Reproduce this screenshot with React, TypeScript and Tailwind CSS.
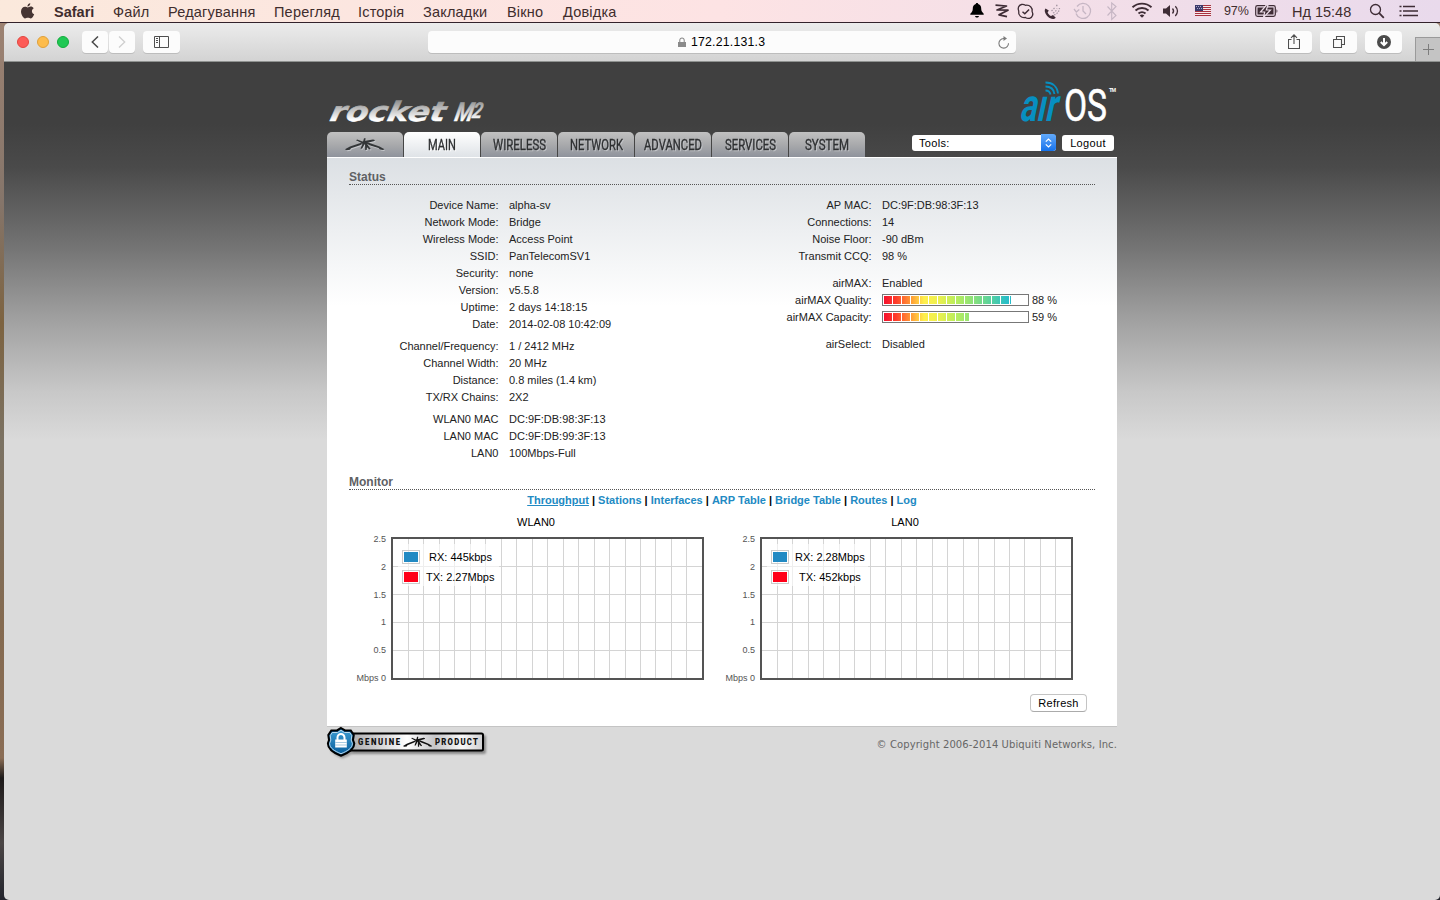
import React from "react";

const MENU: { t: string; w: number; b?: boolean }[] = [
  { t: "Safari", w: 40, b: true },
  { t: "Файл", w: 36 },
  { t: "Редагування", w: 87 },
  { t: "Перегляд", w: 65 },
  { t: "Історія", w: 46 },
  { t: "Закладки", w: 65 },
  { t: "Вікно", w: 37 },
  { t: "Довідка", w: 55 },
];

function MenuBar() {
  return (
    <header className="flex h-[23px] items-center border-b border-[#33222b] bg-linear-to-r from-[#fbe9dc] via-[#fde3e4] to-[#e9daec] text-[#3f2d2d]">
      <svg className="-mt-px ml-5 h-4 w-[15px]" viewBox="0 0 15 16" fill="#463533">
        <path d="M10.3 0.2c.1 1.700-1.300 3.300-2.900 3.300C7.200 1.900 8.700.4 10.300.2zM7.700 4.400c.8 0 1.700-.8 3-.8 1.200 0 2.300.6 3 1.600-2.600 1.500-2.200 5 .5 6.100-.6 1.700-2 4.100-3.400 4.100-1.100 0-1.500-.7-2.900-.7s-1.900.7-2.900.7C3.500 15.400 1 11.900 1 8.600c0-3.200 2-4.900 4-4.900 1.300 0 2 .7 2.700.7z" />
      </svg>
      <nav className="ml-[19px] flex items-center gap-[19px] pt-[2px] leading-5">
        {MENU.map((m) => (
          <span key={m.t} style={{ width: m.w }} className={m.b ? "whitespace-nowrap text-[14.5px] font-bold" : "whitespace-nowrap text-[14.5px] tracking-[0.2px]"}>
            {m.t}
          </span>
        ))}
      </nav>
      <svg className="ml-auto h-[22px] w-[251px]" viewBox="0 0 251 22" fill="none" stroke="#3e2c35" strokeWidth="1.300">
        <g transform="translate(2.500 0)" fill="#000" stroke="none">
          <path d="M7.500 3c.8 0 1.200.5 1.200 1 2.200.7 3 2.500 3 4.500 0 2.600 1 3.700 2.500 5.200v1H.8v-1C2.300 12.300 3.300 11.200 3.300 8.500c0-2 .8-3.800 3-4.500 0-.5.400-1 1.200-1zM5.500 16h4c-.3 1-1 1.500-2 1.500s-1.700-.5-2-1.500z" />
        </g>
        <path d="M28.500 5.200l11 .8-9.500 4 11 .2-9 4.600 8 1.800" strokeWidth="1.700" strokeLinejoin="round" />
        <g transform="translate(4.500 0)">
          <path d="M50 4.500c1.600-.3 3 .2 4 .8 4.300-.7 7.300 2.500 6.600 6.200 1.400 2.600.6 6-2.500 6.800-1.500.4-3 0-4.200-.8-4 .8-7.400-2.300-6.700-6.500C46 8.500 47 5 50 4.500z" />
          <path d="M51 11.800l2.300 2 4.300-4.300" strokeWidth="1.500" />
        </g>
        <g transform="translate(3 1)">
          <path d="M75.500 7.500c-2 2.500.5 6.300 2.500 8.200 2.200 2.200 5.700 3.200 7.800 1l-2.800-2.700-2 1c-1.500-.8-2.900-2.300-3.400-3.600l1.200-1.800z" fill="#3e2c35" stroke="none" />
          <path d="M81.500 10l4-4M83 12c2-1 3.500-2.500 4-4.500M84 14c3-1 5-3 5.500-7M86 4.500h1.500" stroke="#a899a5" strokeDasharray="1.500 1.300" />
        </g>
        <g transform="translate(10 0)" stroke="#c6b6c4">
          <path d="M100 6.500a7.500 7.500 0 1 1-1 7M97 9l2.300 3 3-2.500M106 6v5l3 3" />
        </g>
        <g transform="translate(8 0)" stroke="#c6b6c4">
          <path d="M132.500 6.500l8.500 9-4.300 4V3l4.300 3.500-8.500 9" strokeWidth="1.100" />
        </g>
        <g transform="translate(8 0)">
          <path d="M157.500 7.300a14 14 0 0 1 19 0M160.500 10.500a9.500 9.500 0 0 1 13 0M163.500 13.500a5.300 5.300 0 0 1 7 0" strokeWidth="1.900" />
          <path d="M164.700 15.500l2.300 2.300 2.300-2.300a3.500 3.500 0 0 0-4.600 0z" fill="#3e2c35" stroke="none" />
        </g>
        <g transform="translate(8.500 0)">
          <path d="M187.500 8.500h3l4-3.500v12l-4-3.500h-3z" fill="#3e2c35" stroke="none" />
          <path d="M197 8.500c1.300 1.500 1.300 3.500 0 5M199.800 6.200c2.900 2.800 2.900 7 0 9.800" />
        </g>
        <g transform="translate(8.500 0)" shapeRendering="crispEdges">
          <path d="M219.500 5h16v11h-16z" fill="#f5e8ec" stroke="none" />
          <path d="M219.500 5.500h16M219.500 7.500h16M219.500 9.500h16M219.500 11.500h16M219.500 13.500h16M219.500 15.500h16" stroke="#a8323f" strokeWidth="1" />
          <path d="M219.500 5h8v6h-8z" fill="#3c3a6b" stroke="none" />
          <path d="M220.500 6.500h6M221.500 8.500h6" stroke="#a9a6c8" strokeWidth="1" strokeDasharray="1 1" />
        </g>
      </svg>
      <span className="ml-[6px] w-[27px] text-[12.5px] tracking-[-0.1px]">97%</span>
      <svg className="ml-1 h-[14px] w-6" viewBox="0 0 24 14">
        <rect x=".7" y="1.700" width="19.600" height="10.600" rx="1.800" fill="none" stroke="#3e2c35" strokeWidth="1.200" />
        <rect x="2.500" y="3.500" width="16" height="7" fill="#3e2c35" />
        <path d="M21.500 5.200c1.200.4 1.200 3.200 0 3.600z" fill="#3e2c35" />
        <path d="M11.500 1L5.500 8h4.200l-1.200 5.500 7-7.500h-4.200L13 1z" fill="#3e2c35" stroke="#ecdce8" strokeWidth="1.200" />
      </svg>
      <span className="ml-[13px] w-[61px] whitespace-nowrap pt-[2px] text-[14.500px] leading-5">Нд 15:48</span>
      <svg className="ml-[16px] h-4 w-4" viewBox="0 0 16 16" fill="none" stroke="#3e2c35" strokeWidth="1.300">
        <circle cx="6.500" cy="6.500" r="5" />
        <path d="M10.200 10.200l4.600 4.600" strokeWidth="1.800" />
      </svg>
      <svg className="ml-[14px] mr-[22px] h-3 w-[19px]" viewBox="0 0 19 12" stroke="#3e2c35" strokeWidth="1.700">
        <path d="M.5 1.500h2M4 1.500h12M.5 6h2M4 6h15M.5 10.500h2M4 10.500h15" />
      </svg>
    </header>
  );
}

const toolBtn = "flex h-[22px] items-center justify-center rounded-[4px] bg-[#fcfcfc] shadow-[0_1px_0_#bdbdbd]";

function Toolbar() {
  return (
    <div className="flex h-[39px] shrink-0 items-center border-b border-[#8f9290] bg-linear-to-b from-[#ececec] to-[#d3d3d3] pl-[13px]">
      <div className="flex gap-2">
        <i className="h-3 w-3 rounded-full border border-[#e2463f] bg-[#fd5b57]" />
        <i className="h-3 w-3 rounded-full border border-[#dfa03a] bg-[#fdbc4c]" />
        <i className="h-3 w-3 rounded-full border border-[#12ac3c] bg-[#20c854]" />
      </div>
      <div className={"ml-[13px] w-[26px] " + toolBtn}>
        <svg className="h-3 w-2" viewBox="0 0 8 12" fill="none" stroke="#4b4b4b" strokeWidth="1.500"><path d="M7 .5L1.300 6 7 11.500" /></svg>
      </div>
      <div className={"ml-px w-[26px] " + toolBtn}>
        <svg className="h-3 w-2" viewBox="0 0 8 12" fill="none" stroke="#cfcfcf" strokeWidth="1.300"><path d="M1 .5L6.700 6 1 11.500" /></svg>
      </div>
      <div className={"ml-2 w-[37px] " + toolBtn}>
        <svg className="h-3 w-[15px]" viewBox="0 0 15 12" fill="none" stroke="#4f4f4f"><path d="M.5.5h14v11H.5zM5.500.5v11M2 2.500h2M2 4.500h2M2 6.500h2" /></svg>
      </div>
      <div className={"ml-[248px] w-[588px] " + toolBtn}>
        <div className="ml-auto flex items-center gap-[5px] pl-[20px] text-black">
          <svg className="h-[11px] w-[8px]" viewBox="0 0 9 11"><path d="M0 5h9v5.500H0z" fill="#8a8a8a" /><path d="M2 5V3a2.500 2.500 0 0 1 5 0v2" fill="none" stroke="#8a8a8a" strokeWidth="1.200" /></svg>
          <span className="w-[76px] whitespace-nowrap pt-px text-[12.3px] tracking-[0.2px]">172.21.131.3</span>
        </div>
        <svg className="ml-auto mr-[6px] h-[13px] w-[13px]" viewBox="0 0 13 13" fill="none" stroke="#7b7b7b" strokeWidth="1.100"><path d="M7 2.500H6.500a4.800 4.800 0 1 0 5 4.700" /><path d="M6.500 0l3.500 2.500L6.500 5z" fill="#7b7b7b" stroke="none" /></svg>
      </div>
      <div className={"ml-[259px] w-[37px] " + toolBtn}>
        <svg className="-mt-px h-[15px] w-3" viewBox="0 0 12 15" fill="none" stroke="#4f4f4f" strokeWidth="1.100"><path d="M3.500 5.500h-3v9h11v-9h-3M6 10V1M3 3.800L6 .8l3 3" /></svg>
      </div>
      <div className={"ml-2 w-[37px] " + toolBtn}>
        <svg className="h-3 w-3" viewBox="0 0 12 12" fill="none" stroke="#4f4f4f" strokeWidth="1.100"><path d="M.5 3.500h8v8h-8zM3.500 3V.5h8v8H9" /></svg>
      </div>
      <div className={"ml-2 w-[37px] " + toolBtn}>
        <svg className="h-[14px] w-[14px]" viewBox="0 0 14 14"><circle cx="7" cy="7" r="7" fill="#4b4b4b" /><path d="M7 3v7M3.800 7L7 10.200 10.200 7" fill="none" stroke="#fff" strokeWidth="2" /></svg>
      </div>
      <div className="ml-[13px] flex h-6 w-[25px] items-center justify-center self-end border-l border-t border-[#9a9a9a] bg-[#c4c4c4]">
        <svg className="h-[11px] w-[11px]" viewBox="0 0 11 11" stroke="#7d7d7d"><path d="M0 5.500h11M5.500 0v11" /></svg>
      </div>
    </div>
  );
}

function RifleStar({ color }: { color: string }) {
  return (
    <g fill={color}>
      <path d="M0 11.200L5 8.600 15.500 5l2.500.4-3 1.800L6 10.200l-1 1.500-3.500.5z" />
      <path d="M39.500 11.200l-5-2.800L23 4.400l-1.500 1.200 3 1.600 9 2.800 1.500 1.600 3 .4z" />
      <path d="M11 2.200l1.200-.7 5.300 2L22 2.600l6-1 1.800.4-.3 1L23.500 4.500 19 6.500l-3-1.700z" />
      <path d="M19 .2h1.600L20 5.500l-2.800 5-1.700.2 2-5z" />
      <path d="M20 5l1.800-.5 1 2.500 3 4-1.500.6L22 9.200l-.3 2.800h-1.500z" />
    </g>
  );
}

function Logos() {
  return (
    <div className="flex h-[70px] items-end justify-between">
      <svg className="mb-2 h-[32px] w-[165px] overflow-visible" viewBox="0 0 165 32">
        <defs>
          <linearGradient id="metal" x1="0" y1="6" x2="0" y2="28" gradientUnits="userSpaceOnUse">
            <stop offset="0" stopColor="#808080" /><stop offset=".5" stopColor="#c0c0c0" /><stop offset="1" stopColor="#fff" />
          </linearGradient>
        </defs>
        <g fill="url(#metal)" stroke="url(#metal)" fontWeight="700" fontStyle="italic" transform="translate(6 0) skewX(-12)">
          <text x="2" y="29" strokeWidth=".5" fontFamily="DejaVu Sans" fontSize="27" textLength="115" lengthAdjust="spacingAndGlyphs">rocket</text>
          <text x="127" y="29" strokeWidth=".5" fontFamily="Roboto" fontSize="26" textLength="18" lengthAdjust="spacingAndGlyphs">M</text>
          <text x="144" y="26.500" strokeWidth=".3" fontFamily="Roboto" fontSize="22" textLength="10" lengthAdjust="spacingAndGlyphs">2</text>
        </g>
      </svg>
      <svg className="mb-2 h-[46px] w-[98px] overflow-visible" viewBox="0 0 98 46">
        <g transform="translate(0 43) skewX(-12)">
          <text x="0" y="0" fontFamily="Roboto" fontWeight="700" fontSize="46" fill="#078fc1" textLength="37" lengthAdjust="spacingAndGlyphs">aır</text>
        </g>
        <g fill="none" stroke="#078fc1" strokeWidth="1.800">
          <path d="M26.500 12.500c3 0 4.500 1.500 5 4M26.500 8.500c5.500 0 8.300 3 9 7.500M26.500 4.500c7.500 0 12 4.500 12.500 11" />
        </g>
        <text x="45" y="43" fontFamily="Roboto" fontSize="45" fill="#fff" stroke="#fff" strokeWidth=".6" textLength="43" lengthAdjust="spacingAndGlyphs">OS</text>
        <text x="90" y="14" fontFamily="Liberation Sans" fontWeight="700" fontSize="5.500" fill="#fff" textLength="7">TM</text>
      </svg>
    </div>
  );
}

const TABS = [
  { t: "MAIN", w: 28 },
  { t: "WIRELESS", w: 53 },
  { t: "NETWORK", w: 53 },
  { t: "ADVANCED", w: 58 },
  { t: "SERVICES", w: 51 },
  { t: "SYSTEM", w: 44 },
];

function Tabs() {
  const base = "flex h-[25px] w-[76px] items-center justify-center rounded-t-[5px] ";
  const idle = "bg-linear-to-b from-[#c1c1c1] via-[#a9aaac] to-[#8f939c]";
  return (
    <div className="flex h-[25px]">
      <div className="flex gap-px">
        <div className={base + idle}>
          <svg className="-ml-px h-[14px] w-10" viewBox="0 0 40 14">
            <g transform="translate(.8 1)"><RifleStar color="#c6c8cc" /></g>
            <RifleStar color="#333638" />
          </svg>
        </div>
        {TABS.map((tab, i) => (
          <div key={tab.t} className={base + (i === 0 ? "bg-linear-to-b from-white to-[#dfe3e7]" : idle)}>
            <svg
              className="mt-px h-4 overflow-visible"
              style={{ width: tab.w + 2, filter: i === 0 ? "drop-shadow(1px 1px 0 #fff)" : "drop-shadow(1px 1px 0 #c0c2c6)" }}
              viewBox={`0 0 ${tab.w + 2} 16`}
            >
              <text x="1" y="13.200" fontFamily="Roboto" fontSize="15" stroke="#2e3032" strokeWidth=".35" fill="#2e3032" textLength={tab.w} lengthAdjust="spacingAndGlyphs">{tab.t}</text>
            </svg>
          </div>
        ))}
      </div>
      <div className="ml-[47px] mt-[3px] flex h-4 w-36 rounded-[3px] bg-white text-[11px] leading-4 text-black">
        <span className="pl-[7px] tracking-[0.3px]">Tools:</span>
        <span className="-mt-px ml-auto flex h-[17px] w-[15px] items-center justify-center rounded-r-[3px] bg-linear-to-b from-[#62aafa] to-[#1272ec]">
          <svg className="h-[10px] w-[7px]" viewBox="0 0 7 10" fill="none" stroke="#fff" strokeWidth="1.200"><path d="M.8 3.600L3.500 1l2.700 2.600M.8 6.400L3.500 9l2.700-2.600" /></svg>
        </span>
      </div>
      <button className="ml-[6px] mt-[3px] h-4 w-[52px] rounded-[3px] bg-white text-[11px] leading-4 text-black"><span className="tracking-[0.35px]">Logout</span></button>
    </div>
  );
}

const LEFT = [
  [["Device Name:", "alpha-sv"], ["Network Mode:", "Bridge"], ["Wireless Mode:", "Access Point"], ["SSID:", "PanTelecomSV1"], ["Security:", "none"], ["Version:", "v5.5.8"], ["Uptime:", "2 days 14:18:15"], ["Date:", "2014-02-08 10:42:09"]],
  [["Channel/Frequency:", "1 / 2412 MHz"], ["Channel Width:", "20 MHz"], ["Distance:", "0.8 miles (1.4 km)"], ["TX/RX Chains:", "2X2"]],
  [["WLAN0 MAC", "DC:9F:DB:98:3F:13"], ["LAN0 MAC", "DC:9F:DB:99:3F:13"], ["LAN0", "100Mbps-Full"]],
];

function Row({ k, children }: { k: string; children: React.ReactNode }) {
  return (
    <div className="flex h-[17px] items-center whitespace-nowrap">
      <dt className="w-[149.5px] text-right">{k}</dt>
      <dd className="ml-[10.5px] flex items-center">{children}</dd>
    </div>
  );
}

function Meter({ value }: { value: number }) {
  return (
    <>
      <span className="mb-[2px] flex h-[12px] w-[147px] items-center border border-[#777] bg-white pl-px">
        <span
          className="h-2 bg-[repeating-linear-gradient(90deg,transparent_0_8px,#fff_8px_9px),linear-gradient(90deg,#f5102d_0,#ff3d2b_12px,#ff9a35_27px,#ffef4c_40px,#eef04e_54px,#b9ee5c_72px,#88e07c_90px,#5ad29d_106px,#2bbfc6_122px,#1fb3dc_144px)]"
          style={{ width: Math.round(value * 1.445) }}
        />
      </span>
      <span className="ml-[3px]">{value} %</span>
    </>
  );
}

function SectionTitle({ children }: { children: React.ReactNode }) {
  return <h2 className="h-[15px] border-b border-dotted border-[#555] text-[12px] font-bold leading-[14px] text-[#5f6164]">{children}</h2>;
}

const LINKS = ["Throughput", "Stations", "Interfaces", "ARP Table", "Bridge Table", "Routes", "Log"];

function Chart({ title, rx, tx, rxPad, txPad }: { title: string; rx: string; tx: string; rxPad: number; txPad: number }) {
  const ticks = ["2.5", "2", "1.5", "1", "0.5", "Mbps 0"];
  return (
    <figure className="w-[369px]">
      <figcaption className="ml-[22px] h-4 w-[330px] text-center text-[11px] leading-4 text-black">{title}</figcaption>
      <div className="mt-[7px] flex">
        <div className="-mt-[5px] flex h-[153px] w-[37px] flex-col justify-between whitespace-nowrap text-right text-[9px] leading-[14px] text-[#545454]">
          {ticks.map((t) => <span key={t}>{t}</span>)}
        </div>
        <div className="relative ml-[5px] h-[143px] w-[313px]">
          <svg className="block h-[143px] w-[313px]" viewBox="0 0 313 143" shapeRendering="crispEdges">
            {Array.from({ length: 19 }, (_, i) => <rect key={i} x={Math.floor(2 + (i + 1) * 15.47)} y="2" width="1" height="139" fill="#d4d4d4" />)}
            {[29, 57, 85, 113].map((y) => <rect key={y} x="2" y={y} width="309" height="1" fill="#d4d4d4" />)}
            <rect x="1" y="1" width="311" height="141" fill="none" stroke="#545454" strokeWidth="2" />
          </svg>
          <div className="absolute left-[7px] top-[7px] flex h-[42px] w-[101px] flex-col gap-[6px] bg-white/60 pl-1 pt-[6px] text-[11px] leading-[14px] text-black">
            <div className="flex whitespace-nowrap"><i className="h-[14px] w-[18px] border border-[#ccc] bg-[#228ac3] bg-clip-content p-px" /><span style={{ paddingLeft: rxPad }}>{rx}</span></div>
            <div className="flex whitespace-nowrap"><i className="h-[14px] w-[18px] border border-[#ccc] bg-[#ff0018] bg-clip-content p-px" /><span style={{ paddingLeft: txPad }}>{tx}</span></div>
          </div>
        </div>
      </div>
    </figure>
  );
}

function Badge() {
  return (
    <svg className="h-[34px] w-[164px] overflow-visible" viewBox="0 0 164 34">
      <defs>
        <linearGradient id="plate" x1="0" x2="1">
          <stop offset="0" stopColor="#a5a5a8" /><stop offset=".2" stopColor="#c9c9cb" /><stop offset=".45" stopColor="#fff" /><stop offset=".65" stopColor="#c5c5c8" /><stop offset=".85" stopColor="#f8f8f8" /><stop offset="1" stopColor="#cfcfd1" />
        </linearGradient>
        <linearGradient id="shield" x1="0" x2="0" y1="0" y2="1"><stop offset="0" stopColor="#3a9ad0" /><stop offset="1" stopColor="#0a5f9e" /></linearGradient>
        <filter id="soft"><feGaussianBlur stdDeviation="1" /></filter>
      </defs>
      <rect x="24" y="8" width="135" height="19" rx="2" fill="#8a8a8a" filter="url(#soft)" />
      <path transform="translate(1.500 2)" d="M14 1l4 2.500h6l2.500 5v5l1 3c0 7-6 10-13.500 13C6.500 26.500 1 23 1 16.500L2 13V8l2-4.500h6z" fill="#999" filter="url(#soft)" />
      <rect x="18" y="6.500" width="138" height="17" rx="1.500" fill="url(#plate)" stroke="#000" strokeWidth="2" />
      <path d="M14 1l4 2.400h5.800L26.800 8 26 13l1.300 3.500c0 6-6 9.500-13.300 12.300C6.700 26 .9 22.500.9 16.500L2 13 1.300 8l3-4.600H10z" fill="#0a5f9e" stroke="#000" strokeWidth="2" />
      <path d="M14 3.300l3.500 2.200h5.300l2 3.200-.6 4.300 1.200 3.500c0 4.700-5.200 7.700-11.400 10.200-6.200-2.500-11.400-5.500-11.400-10.200L3.800 13l-.6-4.300 2-3.200h5.300z" fill="url(#shield)" stroke="#cde4f2" strokeWidth=".9" />
      <path d="M10.500 13v-2.500a3.500 3.500 0 0 1 7 0V13" fill="none" stroke="#fff" strokeWidth="2" />
      <path d="M8.200 12.500h11.600v8H8.200z" fill="#fff" />
      <path d="M8.200 15.500h11.600M8.200 18h11.600" stroke="#8fbdd9" strokeWidth=".8" />
      <g fontFamily="Roboto" fontWeight="900" fontSize="9" fill="#111">
        <text transform="translate(31 18.200) scale(.86 1)" textLength="49">GENUINE</text>
        <text transform="translate(108 18.200) scale(.86 1)" textLength="50">PRODUCT</text>
      </g>
      <g transform="translate(76 9.500) scale(.74 .85)"><RifleStar color="#111" /></g>
    </svg>
  );
}

export default function App() {
  return (
    <div className="flex h-[900px] w-[1440px] flex-col overflow-hidden bg-[#302a28] font-['Liberation_Sans',sans-serif]">
      <MenuBar />
      <div className="flex flex-1 bg-[linear-gradient(#9c8272_0,#85756a_180px,#7d6340_300px,#7b7263_420px,#846a50_600px,#8a6d55_735px,#1d1a1a_755px,#4b4646_820px,#23252d_877px)] pl-1">
        <div className="flex flex-1 flex-col overflow-hidden rounded-[5px]">
          <Toolbar />
          <div className="flex-1 bg-[linear-gradient(#404040_0,#404040_62px,#4a4a4a_105px,#737373_184px,#a0a0a0_257px,#c8c8c8_330px,#dadada_378px)] pl-[323px]">
            <div className="w-[790px]">
              <Logos />
              <Tabs />
              <main className="h-[570px] border-b border-t border-b-[#c4c4c4] border-t-white bg-[linear-gradient(#dce0e4_0,#fff_148px)] px-[22px] pt-3 text-[11px] text-[#222]">
                <SectionTitle>Status</SectionTitle>
                <div className="flex pt-3">
                  <dl className="flex w-[373px] flex-col gap-[5px]">
                    {LEFT.map((g, i) => <div key={i}>{g.map(([k, v]) => <Row key={k} k={k}>{v}</Row>)}</div>)}
                  </dl>
                  <dl className="flex flex-col gap-[10px]">
                    <div>
                      <Row k="AP MAC:">DC:9F:DB:98:3F:13</Row>
                      <Row k="Connections:">14</Row>
                      <Row k="Noise Floor:">-90 dBm</Row>
                      <Row k="Transmit CCQ:">98 %</Row>
                    </div>
                    <div>
                      <Row k="airMAX:">Enabled</Row>
                      <Row k="airMAX Quality:"><Meter value={88} /></Row>
                      <Row k="airMAX Capacity:"><Meter value={59} /></Row>
                    </div>
                    <div><Row k="airSelect:">Disabled</Row></div>
                  </dl>
                </div>
                <div className="mt-[13px]"><SectionTitle>Monitor</SectionTitle></div>
                <div className="mt-[2px] flex h-4 justify-center whitespace-pre text-[11px] font-bold leading-4 text-black">
                  {LINKS.map((l, i) => (
                    <React.Fragment key={l}>
                      {i > 0 && " | "}
                      <a className={i === 0 ? "text-[#228ac3] underline underline-offset-1" : "text-[#228ac3]"}>{l}</a>
                    </React.Fragment>
                  ))}
                </div>
                <div className="mt-[6px] flex">
                  <Chart title="WLAN0" rx="RX: 445kbps" tx="TX: 2.27Mbps" rxPad={9} txPad={6} />
                  <Chart title="LAN0" rx="RX: 2.28Mbps" tx="TX: 452kbps" rxPad={6} txPad={10} />
                </div>
                <div className="mt-[9px] flex justify-end pr-2">
                  <button className="h-[18px] w-[57px] rounded-[4px] border border-[#c4c4c4] border-b-[#ababab] bg-white text-[11px] leading-4 tracking-[0.25px] text-black">Refresh</button>
                </div>
              </main>
              <footer className="flex justify-between">
                <Badge />
                <p className="mt-[10px] whitespace-nowrap font-['DejaVu_Sans'] text-[10px] leading-4 tracking-[0.1px] text-[#666]">© Copyright 2006-2014 Ubiquiti Networks, Inc.</p>
              </footer>
            </div>
          </div>
        </div>
      </div>
    </div>
  );
}
